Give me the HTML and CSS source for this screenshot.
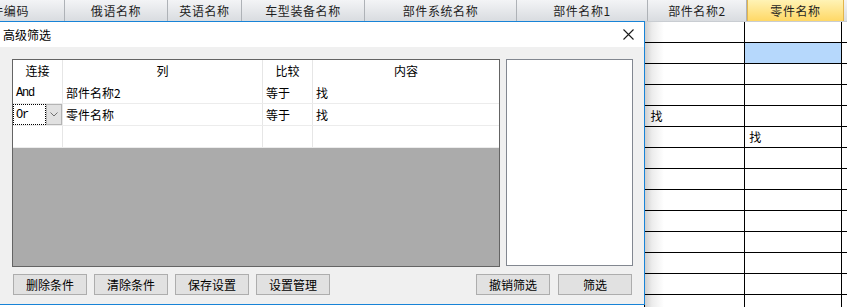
FILE: index.html
```html
<!DOCTYPE html>
<html lang="zh">
<head>
<meta charset="utf-8">
<title>高级筛选</title>
<link rel="stylesheet" href="styles.css">
</head>
<body>
<div class="screen">
  <div class="sheet-head">
    <div class="hc c0"><span>零件编码</span></div>
    <div class="hc c1">俄语名称</div>
    <div class="hc c2">英语名称</div>
    <div class="hc c3">车型装备名称</div>
    <div class="hc c4">部件系统名称</div>
    <div class="hc c5">部件名称1</div>
    <div class="hc c6">部件名称2</div>
    <div class="hc c7 active">零件名称</div>
    <div class="hc c8"></div>
  </div>
  <div class="sheet-body">
    <div class="srow"><div class="sp"></div><div class="ca"></div><div class="cb"></div><div class="cc"></div></div>
    <div class="srow"><div class="sp"></div><div class="ca"></div><div class="cb sel"></div><div class="cc"></div></div>
    <div class="srow"><div class="sp"></div><div class="ca"></div><div class="cb"></div><div class="cc"></div></div>
    <div class="srow"><div class="sp"></div><div class="ca"></div><div class="cb"></div><div class="cc"></div></div>
    <div class="srow"><div class="sp"></div><div class="ca">找</div><div class="cb"></div><div class="cc"></div></div>
    <div class="srow"><div class="sp"></div><div class="ca"></div><div class="cb">找</div><div class="cc"></div></div>
    <div class="srow"><div class="sp"></div><div class="ca"></div><div class="cb"></div><div class="cc"></div></div>
    <div class="srow"><div class="sp"></div><div class="ca"></div><div class="cb"></div><div class="cc"></div></div>
    <div class="srow"><div class="sp"></div><div class="ca"></div><div class="cb"></div><div class="cc"></div></div>
    <div class="srow"><div class="sp"></div><div class="ca"></div><div class="cb"></div><div class="cc"></div></div>
    <div class="srow"><div class="sp"></div><div class="ca"></div><div class="cb"></div><div class="cc"></div></div>
    <div class="srow"><div class="sp"></div><div class="ca"></div><div class="cb"></div><div class="cc"></div></div>
    <div class="srow"><div class="sp"></div><div class="ca"></div><div class="cb"></div><div class="cc"></div></div>
    <div class="srow"><div class="sp"></div><div class="ca"></div><div class="cb"></div><div class="cc"></div></div>
  </div>

  <div class="dialog">
    <div class="titlebar">
      <span class="title">高级筛选</span>
      <svg class="close" width="11" height="11" viewBox="0 0 11 11"><path d="M0.5 0.5 L10.5 10.5 M10.5 0.5 L0.5 10.5" stroke="#1a1a1a" stroke-width="1.1" fill="none"/></svg>
    </div>
    <div class="dbody">
      <div class="fgrid">
        <div class="frow fhead">
          <div class="fc w1 ctr">连接</div>
          <div class="fc w2 ctr">列</div>
          <div class="fc w3 ctr">比较</div>
          <div class="fc w4 ctr">内容</div>
        </div>
        <div class="frow">
          <div class="fc w1 mono">And</div>
          <div class="fc w2">部件名称2</div>
          <div class="fc w3">等于</div>
          <div class="fc w4">找</div>
        </div>
        <div class="frow">
          <div class="fc w1 combo">
            <div class="cb-text mono">Or</div>
            <div class="cb-btn"><svg width="8" height="5" viewBox="0 0 8 5"><path d="M0.5 0.5 L4 4 L7.5 0.5" stroke="#707070" stroke-width="1" fill="none"/></svg></div>
          </div>
          <div class="fc w2">零件名称</div>
          <div class="fc w3">等于</div>
          <div class="fc w4">找</div>
        </div>
        <div class="frow">
          <div class="fc w1"></div>
          <div class="fc w2"></div>
          <div class="fc w3"></div>
          <div class="fc w4"></div>
        </div>
      </div>
      <div class="listbox"></div>
    </div>
    <div class="buttons">
      <button class="btn">删除条件</button>
      <button class="btn">清除条件</button>
      <button class="btn">保存设置</button>
      <button class="btn">设置管理</button>
      <button class="btn push">撤销筛选</button>
      <button class="btn">筛选</button>
    </div>
  </div>
</div>
</body>
</html>
```

FILE: styles.css
```css
html, body {
  margin: 0;
  padding: 0;
  background: #fff;
}
body {
  width: 847px;
  height: 307px;
  overflow: hidden;
  font-family: "Noto Sans CJK SC", "Noto Sans", sans-serif;
  color: #000;
}
.screen {
  position: relative;
  width: 847px;
  height: 307px;
  overflow: hidden;
}

/* spreadsheet header */
.sheet-head {
  display: flex;
  height: 22px;
  box-sizing: border-box;
  border-bottom: 1px solid #c9cdd2;
  background: linear-gradient(#f3f4f6, #d9dce0);
}
.hc {
  box-sizing: border-box;
  height: 21px;
  border-right: 1px solid #aeb2b7;
  display: flex;
  align-items: center;
  justify-content: center;
  font-size: 12px;
  letter-spacing: 0.6px;
  color: #1e1e1e;
  white-space: nowrap;
  overflow: hidden;
  line-height: 21px;
}
.c0 { width: 65px; justify-content: flex-end; padding-right: 35px; }
.c1 { width: 103px; }
.c2 { width: 74px; }
.c3 { width: 123px; }
.c4 { width: 152px; }
.c5 { width: 131px; }
.c6 { width: 99px; }
.c7 { width: 97px; }
.c8 { flex: 1; border-right: none; }
.active {
  background: linear-gradient(#fff3b5, #ffd866);
  border-right: 1px solid #e2b54c;
  border-left: 1px solid #e2b54c;
}

/* spreadsheet body */
.sheet-body {
  display: flex;
  flex-direction: column;
}
.srow {
  display: flex;
  height: 21px;
}
.sp { width: 646px; }
.ca, .cb, .cc {
  box-sizing: border-box;
  height: 21px;
  border-left: 1px solid #000;
  border-bottom: 1px solid #000;
  font-size: 12px;
  line-height: 20px;
  padding-left: 5px;
}
.ca {
  width: 100px;
  background: linear-gradient(to right, #cfcfcf 0px, #ececec 7px, #fff 19px);
}
.cb { width: 97px; padding-left: 4px; }
.cc { flex: 1; }
.sel { background: #b6d8fc; }

/* dialog window */
.dialog {
  position: absolute;
  left: 0;
  top: 21px;
  width: 645px;
  height: 284px;
  box-sizing: border-box;
  border: 1px solid #1883d7;
  border-left: none;
  background: #f0f0f0;
  display: flex;
  flex-direction: column;
}
.titlebar {
  height: 25px;
  flex: none;
  background: #fff;
  display: flex;
  align-items: center;
  justify-content: space-between;
  padding: 0 10px 0 3px;
}
.title {
  font-size: 12px;
  line-height: 14px;
  color: #000;
}
.close { display: block; }

.dbody {
  display: flex;
  gap: 6px;
  padding: 12px 0 0 12px;
}
.fgrid {
  width: 488px;
  height: 208px;
  box-sizing: border-box;
  border: 1px solid #646464;
  background: #ababab;
  display: flex;
  flex-direction: column;
}
.frow {
  display: flex;
  height: 22px;
  box-sizing: border-box;
  background: #fff;
  border-bottom: 1px solid #ececec;
}
.fhead { border-bottom: none; }
.fc {
  box-sizing: border-box;
  height: 100%;
  border-right: 1px solid #e6e6e6;
  font-size: 12px;
  line-height: 21px;
  padding-left: 3px;
  white-space: nowrap;
  overflow: hidden;
}
.w1 { width: 50px; }
.w2 { width: 200px; }
.w3 { width: 50px; }
.w4 { flex: 1; border-right: none; }
.ctr { text-align: center; padding-left: 0; }
.mono {
  font-family: "Liberation Mono", "DejaVu Sans Mono", monospace;
  font-size: 12px;
  letter-spacing: -1.2px;
  line-height: 23px;
}
.combo {
  display: flex;
  padding: 0;
}
.cb-text {
  width: 33px;
  box-sizing: border-box;
  border: 1px dotted #000;
  padding-left: 2px;
  line-height: 20px;
}
.cb-btn {
  width: 16px;
  box-sizing: border-box;
  border: 1px solid #b4b4b4;
  background: #e1e1e1;
  display: flex;
  align-items: center;
  justify-content: center;
}
.cb-btn svg { display: block; }
.listbox {
  width: 127px;
  height: 207px;
  box-sizing: border-box;
  border: 1px solid #828790;
  background: #fff;
}

.buttons {
  display: flex;
  gap: 7px;
  padding: 7px 12px 0 13px;
}
.btn {
  width: 74px;
  height: 21px;
  box-sizing: border-box;
  border: 1px solid #adadad;
  background: #e1e1e1;
  font-family: "Noto Sans CJK SC", "Noto Sans", sans-serif;
  font-size: 12px;
  line-height: 17px;
  color: #000;
  padding: 0;
  margin: 0;
}
.push { margin-left: auto; margin-right: 1px; }
```
